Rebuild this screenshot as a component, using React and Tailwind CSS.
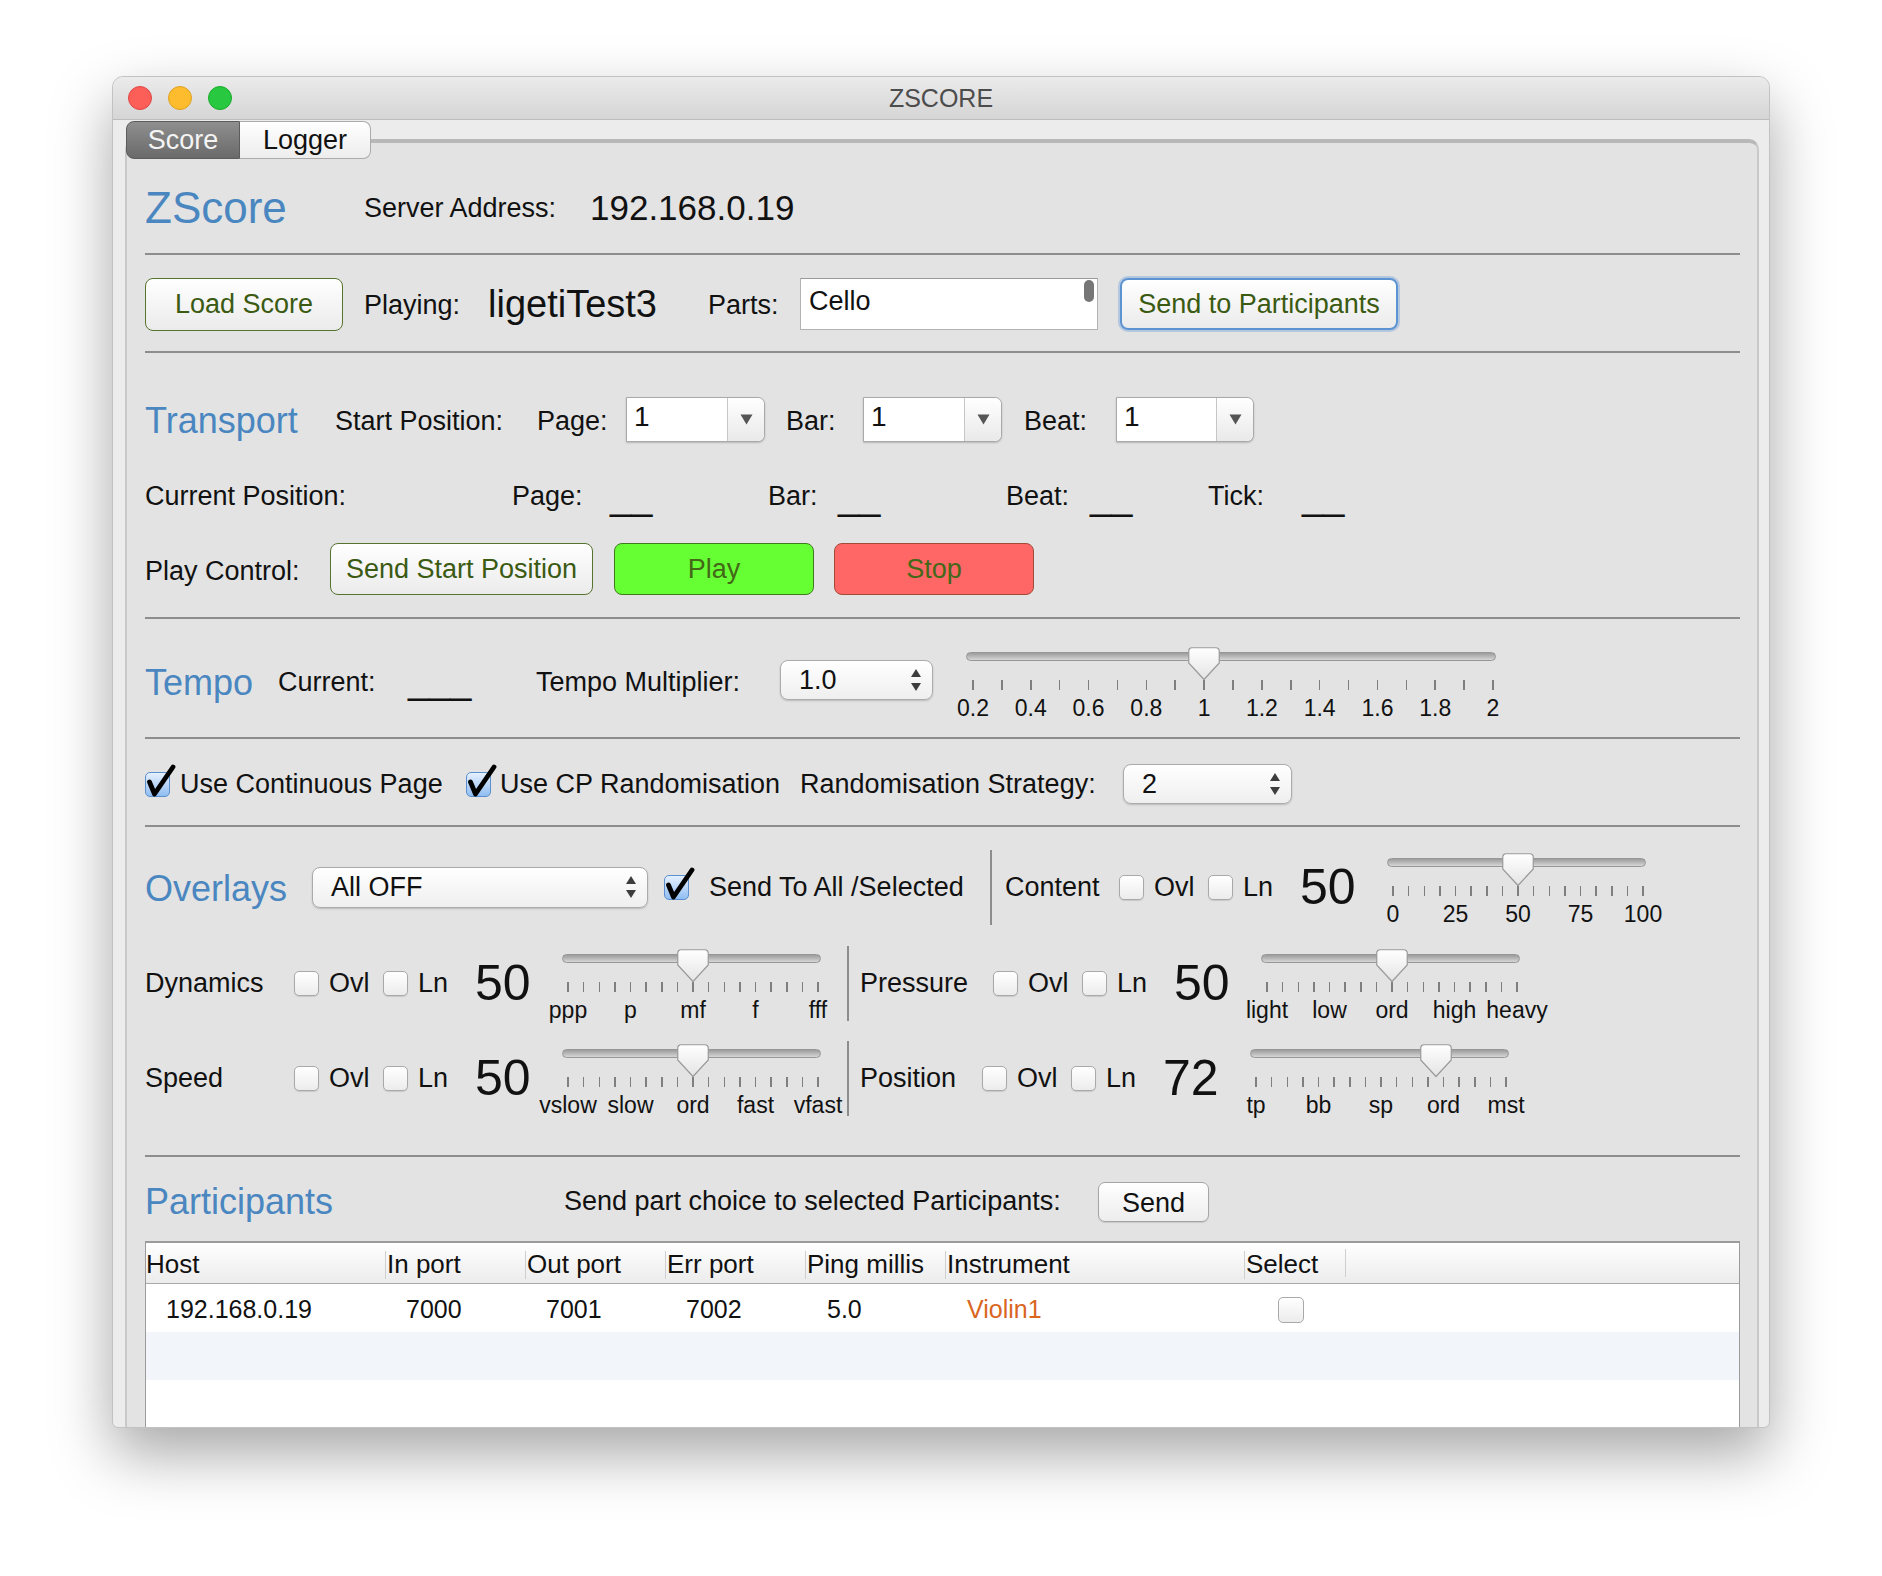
import React from "react";

function Sep() {
  return <div className="h-[2px] bg-[#8d8d8d]" />;
}

function VSep() {
  return <div className="w-[2px] h-[75px] bg-[#8d8d8d] shrink-0" />;
}

function Check({ checked }) {
  return (
    <div className="relative w-[25px] h-[25px] shrink-0">
      {checked ? (
        <div className="w-[25px] h-[25px] rounded-[5px] border border-[#5b8fcf] bg-linear-to-b from-[#e6f0ff] to-[#8fbdf1]" />
      ) : (
        <div className="w-[25px] h-[25px] rounded-[5px] border border-[#a9a9a9] bg-linear-to-b from-white to-[#ececec] shadow-[0_1px_1px_rgba(0,0,0,0.12)]" />
      )}
      {checked && (
        <svg className="absolute left-0 -top-[8px]" width="32" height="34" viewBox="0 0 32 34">
          <path d="M4.5 18 L9.5 30 L28 3" fill="none" stroke="#000" strokeWidth="4.8" strokeLinecap="round" strokeLinejoin="round" />
        </svg>
      )}
    </div>
  );
}

function DropCombo({ cls }) {
  // editable combo with a down arrow
  return (
    <div className={`flex h-[45px] bg-white border border-[#a9a9a9] rounded-r-[7px] shadow-[0_1px_2px_rgba(0,0,0,0.2)] ${cls}`}>
      <div className="flex-1 flex items-center pl-[7px] pb-[4px] text-[28px]">1</div>
      <div className="w-[37px] flex items-center justify-center border-l border-[#c6c6c6] rounded-r-[7px] bg-linear-to-b from-white to-[#e9e9e9]">
        <svg width="13" height="11" viewBox="0 0 13 11">
          <path d="M0.5 0.5 H12.5 L6.5 10.5 Z" fill="#555" />
        </svg>
      </div>
    </div>
  );
}

function Spinner({ cls, value }) {
  return (
    <div className={`flex items-center justify-between pl-[18px] pr-[11px] rounded-[8px] border border-[#ababab] bg-linear-to-b from-white to-[#efefef] shadow-[0_1px_2px_rgba(0,0,0,0.18)] ${cls}`}>
      <span className="text-[27px]">{value}</span>
      <svg width="10" height="22" viewBox="0 0 10 22">
        <path d="M5 0 L10 8 H0 Z M5 22 L10 14 H0 Z" fill="#3d3d3d" />
      </svg>
    </div>
  );
}

function Thumb() {
  return (
    <svg width="32" height="34" viewBox="0 0 32 34">
      <defs>
        <linearGradient id="thumbg" x1="0" y1="0" x2="0" y2="1">
          <stop offset="0" stopColor="#ffffff" />
          <stop offset="1" stopColor="#e4e4e4" />
        </linearGradient>
      </defs>
      <path
        d="M4 0.75 H28 A3.25 3.25 0 0 1 31.25 4 V16 L16 32.5 L0.75 16 V4 A3.25 3.25 0 0 1 4 0.75 Z"
        fill="url(#thumbg)"
        stroke="#9a9a9a"
        strokeWidth="1.2"
      />
    </svg>
  );
}

function Slider({ cls, first, last, count, labels, every, pos }) {
  const step = (last - first) / (count - 1);
  const ticks = Array.from({ length: count }, (_, i) => first + i * step);
  const tx = first + pos * (last - first);
  return (
    <div className={`relative h-[74px] shrink-0 ${cls}`}>
      <div className="absolute left-0 right-0 top-[5px] h-[9px] rounded-full border border-[#979797] bg-linear-to-b from-[#9c9c9c] to-[#d6d6d6]" />
      {ticks.map((x, i) => (
        <div key={i} className="absolute top-[33px] h-[10px] w-[1.5px] bg-[#7f7f7f]" style={{ left: x - 0.75 }} />
      ))}
      {labels.map((l, i) => (
        <div
          key={l + i}
          className="absolute top-[48px] text-[23px] leading-[26px] whitespace-nowrap -translate-x-1/2"
          style={{ left: ticks[i * every] }}
        >
          {l}
        </div>
      ))}
      <div className="absolute top-0" style={{ left: tx - 16 }}>
        <Thumb />
      </div>
    </div>
  );
}

function Group({ label, lcls, value, slider }) {
  return (
    <div className="flex items-center shrink-0">
      <div className={`text-[27px] ${lcls}`}>{label}</div>
      <Check />
      <div className="ml-[10px] w-[54px] text-[27px]">Ovl</div>
      <Check />
      <div className="ml-[10px] w-[57px] text-[27px]">Ln</div>
      <div className="w-[87px] text-[50px]">{value}</div>
      {slider}
    </div>
  );
}

const overlaySlider = (labels, pos) => (
  <Slider cls="w-[259px] mt-[6px]" first={6} last={256} count={17} every={4} labels={labels} pos={pos} />
);

export default function App() {
  return (
    <div className="min-h-[1576px] bg-white pt-[76px] pl-[112px] font-['Liberation_Sans',Arial,sans-serif] text-[#111]">
      <div className="w-[1658px] h-[1352px] flex flex-col overflow-hidden rounded-t-[11px] rounded-b-[6px] border border-[#c2c2c2] bg-[#ececec] shadow-[0_26px_60px_rgba(0,0,0,0.35)]">
        {/* title bar */}
        <div className="h-[43px] shrink-0 grid grid-cols-[1fr_auto_1fr] items-center border-b border-[#bcbcbc] bg-linear-to-b from-[#ebebeb] to-[#d5d5d5]">
          <div className="flex gap-[16px] pl-[15px]">
            <div className="w-[24px] h-[24px] rounded-full bg-[#fc5f57] border border-[#df4744]" />
            <div className="w-[24px] h-[24px] rounded-full bg-[#fdbc2e] border border-[#dea123]" />
            <div className="w-[24px] h-[24px] rounded-full bg-[#28c840] border border-[#1aab29]" />
          </div>
          <div className="text-[25px] text-[#4c4c4c] pt-[2px]">ZSCORE</div>
          <div />
        </div>

        <div className="flex-1 flex flex-col pt-[1px]">
          {/* tabs */}
          <div className="relative z-10 flex h-[38px] ml-[13px] text-[27px]">
            <div className="w-[114px] flex items-center justify-center rounded-l-[8px] border border-[#5c5c5c] bg-linear-to-b from-[#8f8f8f] to-[#6a6a6a] text-[#f4f4f4]">
              Score
            </div>
            <div className="w-[131px] flex items-center justify-center rounded-r-[8px] border border-l-0 border-[#ababab] bg-linear-to-b from-white to-[#ededed]">
              Logger
            </div>
          </div>

          {/* panel */}
          <div className="-mt-[20px] ml-[12px] mr-[10px] flex-1 flex flex-col rounded-t-[10px] border-t-[4px] border-x-2 border-t-[#b8b8b8] border-x-[#c9c9c9] bg-[#e3e3e3] pl-[18px] pr-[17px]">
            {/* header */}
            <div className="flex items-center h-[110px] pt-[20px] shrink-0">
              <div className="w-[219px] text-[44px] text-[#4a86c0]">ZScore</div>
              <div className="w-[226px] text-[27px]">Server Address:</div>
              <div className="text-[35px]">192.168.0.19</div>
            </div>
            <Sep />

            {/* score row */}
            <div className="flex items-center h-[96px] pt-[2px] shrink-0">
              <button className="w-[198px] h-[53px] rounded-[8px] border-[1.5px] border-[#58722f] bg-linear-to-b from-white to-[#ebebeb] text-[27px] text-[#3b5a12]">
                Load Score
              </button>
              <div className="ml-[21px] w-[124px] text-[27px] pt-[3px]">Playing:</div>
              <div className="w-[220px] text-[38px]">ligetiTest3</div>
              <div className="w-[92px] text-[27px] pt-[3px]">Parts:</div>
              <div className="relative w-[298px] h-[52px] flex items-center pl-[8px] pb-[5px] bg-white border-[1.5px] border-[#b3b3b3] border-t-[#9a9a9a] text-[27px]">
                Cello
                <div className="absolute right-[3px] top-[1px] w-[10px] h-[22px] rounded-full bg-[#767676]" />
              </div>
              <button className="ml-[22px] w-[278px] h-[52px] rounded-[8px] border-2 border-[#5d93d1] shadow-[0_0_0_2px_rgba(120,165,220,0.45)] bg-linear-to-b from-white to-[#ebebeb] text-[27px] text-[#3b5a12]">
                Send to Participants
              </button>
            </div>
            <Sep />

            {/* transport */}
            <div className="flex flex-col pt-[43px] pb-[22px] shrink-0 text-[27px]">
              <div className="flex items-center h-[46px]">
                <div className="w-[190px] text-[36px] text-[#4a86c0] pt-[4px]">Transport</div>
                <div className="w-[202px] pt-[4px]">Start Position:</div>
                <div className="w-[89px] pt-[4px]">Page:</div>
                <DropCombo cls="w-[139px]" />
                <div className="ml-[21px] w-[77px] pt-[4px]">Bar:</div>
                <DropCombo cls="w-[139px]" />
                <div className="ml-[22px] w-[92px] pt-[4px]">Beat:</div>
                <DropCombo cls="w-[138px]" />
              </div>
              <div className="flex items-center h-[46px] mt-[30px] pt-[2px]">
                <div className="w-[367px]">Current Position:</div>
                <div className="w-[98px]">Page:</div>
                <div className="w-[158px] text-[38px]">__</div>
                <div className="w-[70px]">Bar:</div>
                <div className="w-[168px] text-[38px]">__</div>
                <div className="w-[84px]">Beat:</div>
                <div className="w-[118px] text-[38px]">__</div>
                <div className="w-[94px]">Tick:</div>
                <div className="text-[38px]">__</div>
              </div>
              <div className="flex items-center h-[52px] mt-[25px]">
                <div className="w-[185px] pt-[4px]">Play Control:</div>
                <button className="w-[263px] h-[52px] rounded-[8px] border-[1.5px] border-[#58722f] bg-linear-to-b from-white to-[#ebebeb] text-[#3b5a12]">
                  Send Start Position
                </button>
                <button className="ml-[21px] w-[200px] h-[52px] rounded-[8px] border-[1.5px] border-[#3f7a1e] bg-[#66ff33] text-[#436818]">
                  Play
                </button>
                <button className="ml-[20px] w-[200px] h-[52px] rounded-[8px] border-[1.5px] border-[#a24b38] bg-[#ff6666] text-[#436818]">
                  Stop
                </button>
              </div>
            </div>
            <Sep />

            {/* tempo */}
            <div className="flex items-center h-[118px] pt-[4px] shrink-0 text-[27px]">
              <div className="w-[133px] text-[36px] text-[#4a86c0] pt-[6px]">Tempo</div>
              <div className="w-[130px] pt-[4px]">Current:</div>
              <div className="w-[128px] text-[38px]">___</div>
              <div className="w-[244px] pt-[4px]">Tempo Multiplier:</div>
              <Spinner cls="w-[153px] h-[40px]" value="1.0" />
              <Slider
                cls="w-[530px] ml-[33px] mt-[8px]"
                first={7}
                last={527}
                count={19}
                every={2}
                pos={8 / 18}
                labels={["0.2", "0.4", "0.6", "0.8", "1", "1.2", "1.4", "1.6", "1.8", "2"]}
              />
            </div>
            <Sep />

            {/* continuous page */}
            <div className="flex items-center h-[86px] pt-[4px] shrink-0 text-[27px]">
              <Check checked />
              <div className="ml-[10px] w-[286px]">Use Continuous Page</div>
              <Check checked />
              <div className="ml-[9px] w-[300px]">Use CP Randomisation</div>
              <div className="w-[323px]">Randomisation Strategy:</div>
              <Spinner cls="w-[169px] h-[40px]" value="2" />
            </div>
            <Sep />

            {/* overlays */}
            <div className="flex flex-col pt-[12px] pb-[30px] shrink-0">
              <div className="flex items-center h-[96px]">
                <div className="w-[167px] text-[36px] text-[#4a86c0] pt-[4px]">Overlays</div>
                <Spinner cls="w-[336px] h-[41px]" value="All OFF" />
                <div className="ml-[16px]">
                  <Check checked />
                </div>
                <div className="ml-[20px] w-[281px] text-[27px]">Send To All /Selected</div>
                <VSep />
                <div className="ml-[13px]">
                  <Group label="Content" lcls="w-[114px]" value="50" slider={overlaySlider(["0", "25", "50", "75", "100"], 0.5)} />
                </div>
              </div>
              <div className="flex items-center h-[96px]">
                <Group label="Dynamics" lcls="w-[149px]" value="50" slider={overlaySlider(["ppp", "p", "mf", "f", "fff"], 0.5)} />
                <div className="ml-[26px]">
                  <VSep />
                </div>
                <div className="ml-[11px]">
                  <Group label="Pressure" lcls="w-[133px]" value="50" slider={overlaySlider(["light", "low", "ord", "high", "heavy"], 0.5)} />
                </div>
              </div>
              <div className="flex items-center h-[94px]">
                <Group label="Speed" lcls="w-[149px]" value="50" slider={overlaySlider(["vslow", "slow", "ord", "fast", "vfast"], 0.5)} />
                <div className="ml-[26px]">
                  <VSep />
                </div>
                <div className="ml-[11px]">
                  <Group label="Position" lcls="w-[122px]" value="72" slider={overlaySlider(["tp", "bb", "sp", "ord", "mst"], 0.72)} />
                </div>
              </div>
            </div>
            <Sep />

            {/* participants */}
            <div className="flex items-center h-[84px] pt-[5px] shrink-0">
              <div className="w-[419px] text-[36px] text-[#4a86c0]">Participants</div>
              <div className="w-[534px] text-[27px]">Send part choice to selected Participants:</div>
              <button className="w-[111px] h-[40px] rounded-[7px] border border-[#a5a5a5] bg-linear-to-b from-white to-[#ededed] shadow-[0_1px_1px_rgba(0,0,0,0.12)] text-[27px]">
                Send
              </button>
            </div>

            {/* table */}
            <div className="flex-1 flex flex-col bg-white border-t-2 border-x border-[#9b9b9b]">
              <div className="flex h-[41px] shrink-0 border-b border-[#a9a9a9] bg-linear-to-b from-white to-[#ececec] text-[26px]">
                <div className="w-[239px] flex items-center pt-[3px]">Host</div>
                {[
                  ["In port", "w-[140px]"],
                  ["Out port", "w-[140px]"],
                  ["Err port", "w-[140px]"],
                  ["Ping millis", "w-[140px]"],
                  ["Instrument", "w-[299px]"],
                  ["Select", "w-[101px]"],
                ].map(([t, w]) => (
                  <div key={t} className={`flex items-center pt-[3px] ${w}`}>
                    <div className="w-px h-[28px] bg-[#cfcfcf] mr-px" />
                    {t}
                  </div>
                ))}
                <div className="flex items-center">
                  <div className="w-px h-[28px] bg-[#cfcfcf]" />
                </div>
              </div>
              <div className="flex items-center h-[48px] pt-[3px] shrink-0 text-[25px]">
                <div className="w-[239px] pl-[20px]">192.168.0.19</div>
                <div className="w-[140px] pl-[21px]">7000</div>
                <div className="w-[140px] pl-[21px]">7001</div>
                <div className="w-[140px] pl-[21px]">7002</div>
                <div className="w-[140px] pl-[22px]">5.0</div>
                <div className="w-[299px] pl-[22px] text-[#d9661e]">Violin1</div>
                <div className="w-[101px] pl-[34px]">
                  <div className="w-[26px] h-[26px] rounded-[5px] border border-[#a9a9a9] bg-linear-to-b from-white to-[#ececec]" />
                </div>
              </div>
              <div className="h-[48px] shrink-0 bg-[#f2f5f9]" />
              <div className="flex-1" />
            </div>
          </div>
        </div>
      </div>
    </div>
  );
}
